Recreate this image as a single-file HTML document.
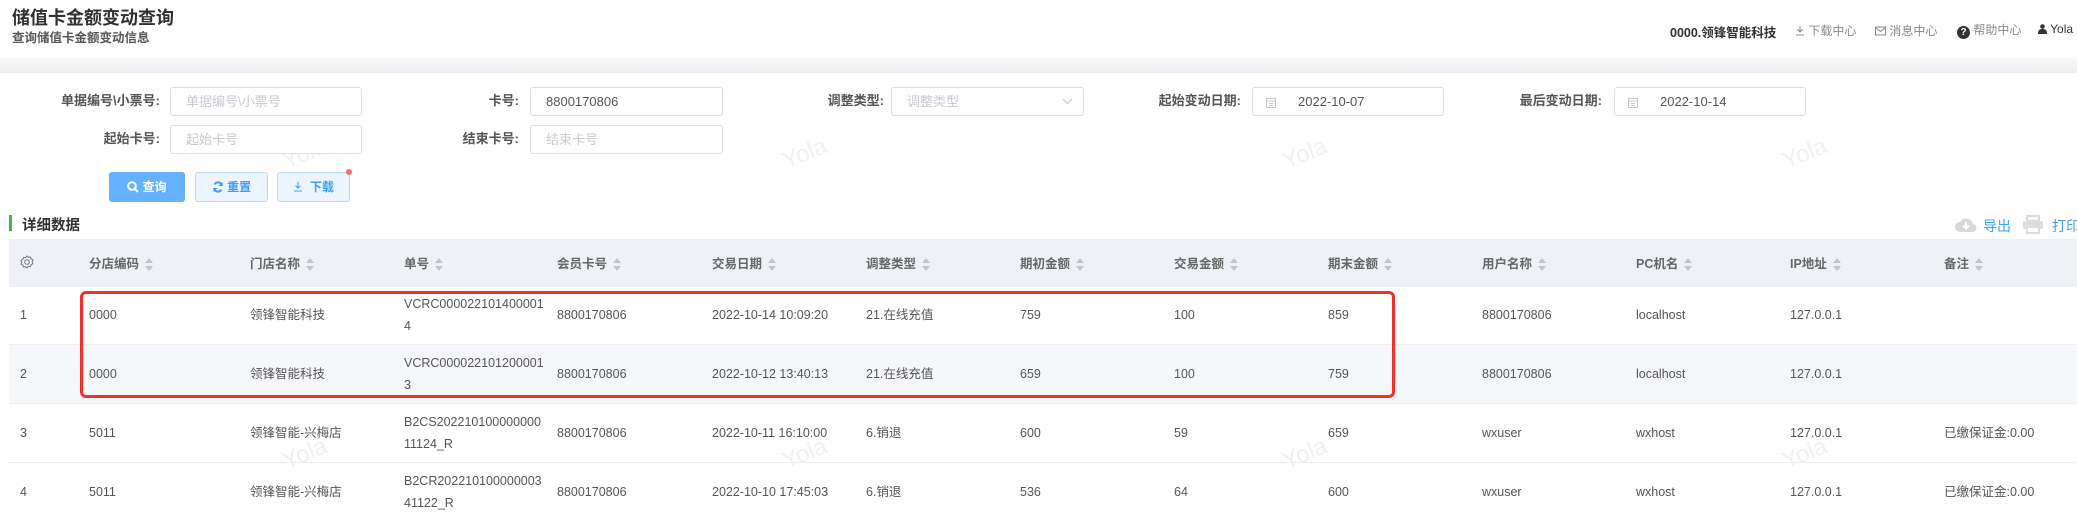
<!DOCTYPE html>
<html><head><meta charset="utf-8"><style>
*{margin:0;padding:0;box-sizing:border-box}
body{width:2077px;height:516px;overflow:hidden;background:#fff;font-family:"Liberation Sans","Noto Sans CJK SC",sans-serif;color:#606266;position:relative}
.a{position:absolute;white-space:nowrap}
.lbl{font-size:13px;font-weight:bold;color:#555;text-align:right;line-height:28px}
.inp{position:absolute;border:1px solid #dcdfe6;border-radius:3px;height:29px;font-size:13px;line-height:27px;padding-left:15px;color:#555;background:#fff}
.ph{color:#c8cad0}
.btn{position:absolute;top:172px;height:30px;border-radius:3px;font-size:12px;font-weight:bold;line-height:28px;text-align:center}
.th{position:absolute;top:256px;font-size:12.5px;font-weight:bold;color:#666;line-height:16px}
.car{display:inline-block;vertical-align:middle;margin-left:6px;width:8px;height:14px;position:relative}
.car:before{content:"";position:absolute;left:0;top:0;border:4px solid transparent;border-bottom:5px solid #c0c4cc;border-top:0}
.car:after{content:"";position:absolute;left:0;top:8px;border:4px solid transparent;border-top:5px solid #c0c4cc;border-bottom:0}
.td{position:absolute;font-size:12.5px;color:#555;line-height:22px}
.wm{position:absolute;font-size:24px;color:#f1f1f1;transform:rotate(-22deg);font-family:"Liberation Sans",sans-serif}
</style></head><body>
<div class="wm" style="left:282px;top:140px">Yola</div>
<div class="wm" style="left:782px;top:140px">Yola</div>
<div class="wm" style="left:1282px;top:140px">Yola</div>
<div class="wm" style="left:1782px;top:140px">Yola</div>

<div class="a" style="left:12px;top:4px;font-size:18px;font-weight:bold;color:#303133">储值卡金额变动查询</div>
<div class="a" style="left:12px;top:27px;font-size:12.5px;font-weight:bold;color:#555">查询储值卡金额变动信息</div>

<div class="a" style="left:1670px;top:22px;font-size:12.5px;font-weight:bold;color:#303133">0000.领锋智能科技</div>
<div class="a" style="left:1795px;top:22px;font-size:12px;color:#888"><svg width="10" height="11" viewBox="0 0 10 11" style="vertical-align:-1px"><path d="M5 1v6M2.5 4.5L5 7l2.5-2.5M1 10h8" stroke="#888" fill="none"/></svg> 下载中心</div>
<div class="a" style="left:1875px;top:22px;font-size:12px;color:#888"><svg width="11" height="10" viewBox="0 0 11 10" style="vertical-align:-1px"><rect x="0.5" y="1" width="10" height="8" fill="none" stroke="#888"/><path d="M1 2l4.5 3.5L10 2" stroke="#888" fill="none"/></svg> 消息中心</div>
<div class="a" style="left:1957px;top:21px;font-size:12px;color:#888"><span style="display:inline-block;width:13px;height:13px;border-radius:50%;background:#333;color:#fff;font-size:10px;font-weight:bold;text-align:center;line-height:13px;vertical-align:-1px">?</span> 帮助中心</div>
<div class="a" style="left:2038px;top:22px;font-size:12px;color:#333"><svg width="9" height="10" viewBox="0 0 9 10" style="vertical-align:-1px"><circle cx="4.5" cy="2.5" r="2.3" fill="#333"/><path d="M0 10c0-4 1.5-5 4.5-5s4.5 1 4.5 5z" fill="#333"/></svg> Yola</div>

<div class="a" style="left:0;top:58px;width:2077px;height:15px;background:linear-gradient(#f7f8f9,#eceef1)"></div>

<div class="a lbl" style="right:1917px;top:87px">单据编号\小票号:</div>
<div class="inp" style="left:170px;top:87px;width:192px"><span class="ph">单据编号\小票号</span></div>
<div class="a lbl" style="right:1558px;top:87px">卡号:</div>
<div class="inp" style="left:530px;top:87px;width:193px">8800170806</div>
<div class="a lbl" style="right:1193px;top:87px">调整类型:</div>
<div class="inp" style="left:891px;top:87px;width:193px"><span class="ph">调整类型</span><svg style="position:absolute;right:10px;top:10px" width="11" height="7" viewBox="0 0 11 7"><path d="M1 1l4.5 4.5L10 1" stroke="#c0c4cc" fill="none"/></svg></div>
<div class="a lbl" style="right:836px;top:87px">起始变动日期:</div>
<div class="inp" style="left:1252px;top:87px;width:192px;padding-left:45px"><svg style="position:absolute;left:13px;top:9px" width="10" height="11" viewBox="0 0 10 11"><rect x="0.5" y="1.5" width="9" height="9" fill="none" stroke="#c8cad0"/><path d="M1 4h8M3 6.5h4M3 8.5h4" stroke="#c8cad0"/></svg>2022-10-07</div>
<div class="a lbl" style="right:475px;top:87px">最后变动日期:</div>
<div class="inp" style="left:1614px;top:87px;width:192px;padding-left:45px"><svg style="position:absolute;left:13px;top:9px" width="10" height="11" viewBox="0 0 10 11"><rect x="0.5" y="1.5" width="9" height="9" fill="none" stroke="#c8cad0"/><path d="M1 4h8M3 6.5h4M3 8.5h4" stroke="#c8cad0"/></svg>2022-10-14</div>

<div class="a lbl" style="right:1917px;top:125px">起始卡号:</div>
<div class="inp" style="left:170px;top:125px;width:192px"><span class="ph">起始卡号</span></div>
<div class="a lbl" style="right:1558px;top:125px">结束卡号:</div>
<div class="inp" style="left:530px;top:125px;width:193px"><span class="ph">结束卡号</span></div>

<div class="btn" style="left:109px;width:76px;background:#66b1ff;color:#fff;border:1px solid #66b1ff"><svg width="12" height="12" viewBox="0 0 12 12" style="vertical-align:-2px"><circle cx="5" cy="5" r="3.8" stroke="#fff" stroke-width="2" fill="none"/><path d="M8 8l3 3" stroke="#fff" stroke-width="2"/></svg> 查询</div>
<div class="btn" style="left:195px;width:73px;background:#ecf5ff;color:#409eff;border:1px solid #b3d8ff"><svg width="12" height="12" viewBox="0 0 12 12" style="vertical-align:-2px"><path d="M10 5A4 4 0 0 0 2.5 3.5M2 7a4 4 0 0 0 7.5 1.5" stroke="#409eff" stroke-width="2" fill="none"/><path d="M10.5 1v4h-4zM1.5 11V7h4z" fill="#409eff"/></svg> 重置</div>
<div class="btn" style="left:277px;width:73px;background:#ecf5ff;color:#409eff;border:1px solid #b3d8ff"><svg width="10" height="11" viewBox="0 0 10 11" style="vertical-align:-1px"><path d="M5 1v6M2.5 4.5L5 7l2.5-2.5M1 10h8" stroke="#409eff" fill="none"/></svg>&nbsp; 下载</div>
<div class="a" style="left:346px;top:169px;width:6px;height:6px;border-radius:50%;background:#f56c6c"></div>

<div class="a" style="left:9px;top:215px;width:3px;height:16px;background:#4caf50"></div>
<div class="a" style="left:22px;top:214px;font-size:14.5px;font-weight:bold;color:#333">详细数据</div>
<div class="a" style="left:1955px;top:216px"><svg width="22" height="17" viewBox="0 0 22 17"><path d="M5 16a5 5 0 0 1 0-10 7 7 0 0 1 13 2 4 4 0 0 1-1 8z" fill="#d9d9d9"/><path d="M11 6v6M8 9.5l3 3 3-3" stroke="#fff" stroke-width="2" fill="none"/></svg></div>
<div class="a" style="left:1983px;top:216px;font-size:14px;color:#409eff">导出</div>
<div class="a" style="left:2022px;top:215px"><svg width="22" height="19" viewBox="0 0 22 19"><rect x="5" y="1" width="12" height="5" fill="none" stroke="#ddd" stroke-width="2"/><rect x="1" y="6" width="20" height="8" rx="2" fill="#ddd"/><rect x="5" y="12" width="12" height="6" fill="#fff" stroke="#ddd" stroke-width="2"/></svg></div>
<div class="a" style="left:2052px;top:216px;font-size:14px;color:#409eff">打印</div>

<div class="a" style="left:9px;top:239px;width:2068px;height:47px;background:#eef1f6"></div>
<div class="a" style="left:9px;top:344px;width:2068px;height:59px;background:#f6f7fa"></div>
<div class="a" style="left:9px;top:286px;width:2068px;height:1px;background:#ebeef5"></div>
<div class="a" style="left:9px;top:344px;width:2068px;height:1px;background:#ebeef5"></div>
<div class="a" style="left:9px;top:403px;width:2068px;height:1px;background:#ebeef5"></div>
<div class="a" style="left:9px;top:462px;width:2068px;height:1px;background:#ebeef5"></div>

<div class="wm" style="left:282px;top:440px">Yola</div>
<div class="wm" style="left:782px;top:440px">Yola</div>
<div class="wm" style="left:1282px;top:440px">Yola</div>
<div class="wm" style="left:1782px;top:440px">Yola</div>

<div class="a" style="left:20px;top:255px"><svg width="14" height="14" viewBox="0 0 14 14"><circle cx="7" cy="7" r="2.3" fill="none" stroke="#777"/><path d="M7 1l1.5 1.3 2-.3.6 1.9 1.8 1-.6 1.9.6 1.9-1.8 1-.6 1.9-2-.3L7 13l-1.5-1.3-2 .3-.6-1.9-1.8-1 .6-1.9-.6-1.9 1.8-1 .6-1.9 2 .3z" fill="none" stroke="#777"/></svg></div>
<div class="th" style="left:89px">分店编码<span class="car"></span></div>
<div class="th" style="left:250px">门店名称<span class="car"></span></div>
<div class="th" style="left:404px">单号<span class="car"></span></div>
<div class="th" style="left:557px">会员卡号<span class="car"></span></div>
<div class="th" style="left:712px">交易日期<span class="car"></span></div>
<div class="th" style="left:866px">调整类型<span class="car"></span></div>
<div class="th" style="left:1020px">期初金额<span class="car"></span></div>
<div class="th" style="left:1174px">交易金额<span class="car"></span></div>
<div class="th" style="left:1328px">期末金额<span class="car"></span></div>
<div class="th" style="left:1482px">用户名称<span class="car"></span></div>
<div class="th" style="left:1636px">PC机名<span class="car"></span></div>
<div class="th" style="left:1790px">IP地址<span class="car"></span></div>
<div class="th" style="left:1944px">备注<span class="car"></span></div>

<div class="td" style="left:20px;top:304px">1</div>
<div class="td" style="left:89px;top:304px">0000</div>
<div class="td" style="left:250px;top:304px">领锋智能科技</div>
<div class="td" style="left:404px;top:293px">VCRC000022101400001<br>4</div>
<div class="td" style="left:557px;top:304px">8800170806</div>
<div class="td" style="left:712px;top:304px">2022-10-14 10:09:20</div>
<div class="td" style="left:866px;top:304px">21.在线充值</div>
<div class="td" style="left:1020px;top:304px">759</div>
<div class="td" style="left:1174px;top:304px">100</div>
<div class="td" style="left:1328px;top:304px">859</div>
<div class="td" style="left:1482px;top:304px">8800170806</div>
<div class="td" style="left:1636px;top:304px">localhost</div>
<div class="td" style="left:1790px;top:304px">127.0.0.1</div>

<div class="td" style="left:20px;top:363px">2</div>
<div class="td" style="left:89px;top:363px">0000</div>
<div class="td" style="left:250px;top:363px">领锋智能科技</div>
<div class="td" style="left:404px;top:352px">VCRC000022101200001<br>3</div>
<div class="td" style="left:557px;top:363px">8800170806</div>
<div class="td" style="left:712px;top:363px">2022-10-12 13:40:13</div>
<div class="td" style="left:866px;top:363px">21.在线充值</div>
<div class="td" style="left:1020px;top:363px">659</div>
<div class="td" style="left:1174px;top:363px">100</div>
<div class="td" style="left:1328px;top:363px">759</div>
<div class="td" style="left:1482px;top:363px">8800170806</div>
<div class="td" style="left:1636px;top:363px">localhost</div>
<div class="td" style="left:1790px;top:363px">127.0.0.1</div>

<div class="td" style="left:20px;top:422px">3</div>
<div class="td" style="left:89px;top:422px">5011</div>
<div class="td" style="left:250px;top:422px">领锋智能-兴梅店</div>
<div class="td" style="left:404px;top:411px">B2CS202210100000000<br>11124_R</div>
<div class="td" style="left:557px;top:422px">8800170806</div>
<div class="td" style="left:712px;top:422px">2022-10-11 16:10:00</div>
<div class="td" style="left:866px;top:422px">6.销退</div>
<div class="td" style="left:1020px;top:422px">600</div>
<div class="td" style="left:1174px;top:422px">59</div>
<div class="td" style="left:1328px;top:422px">659</div>
<div class="td" style="left:1482px;top:422px">wxuser</div>
<div class="td" style="left:1636px;top:422px">wxhost</div>
<div class="td" style="left:1790px;top:422px">127.0.0.1</div>
<div class="td" style="left:1944px;top:422px">已缴保证金:0.00</div>

<div class="td" style="left:20px;top:481px">4</div>
<div class="td" style="left:89px;top:481px">5011</div>
<div class="td" style="left:250px;top:481px">领锋智能-兴梅店</div>
<div class="td" style="left:404px;top:470px">B2CR202210100000003<br>41122_R</div>
<div class="td" style="left:557px;top:481px">8800170806</div>
<div class="td" style="left:712px;top:481px">2022-10-10 17:45:03</div>
<div class="td" style="left:866px;top:481px">6.销退</div>
<div class="td" style="left:1020px;top:481px">536</div>
<div class="td" style="left:1174px;top:481px">64</div>
<div class="td" style="left:1328px;top:481px">600</div>
<div class="td" style="left:1482px;top:481px">wxuser</div>
<div class="td" style="left:1636px;top:481px">wxhost</div>
<div class="td" style="left:1790px;top:481px">127.0.0.1</div>
<div class="td" style="left:1944px;top:481px">已缴保证金:0.00</div>

<div class="a" style="left:80px;top:291px;width:1315px;height:107px;border:3px solid #f2302b;border-radius:6px"></div>
</body></html>
